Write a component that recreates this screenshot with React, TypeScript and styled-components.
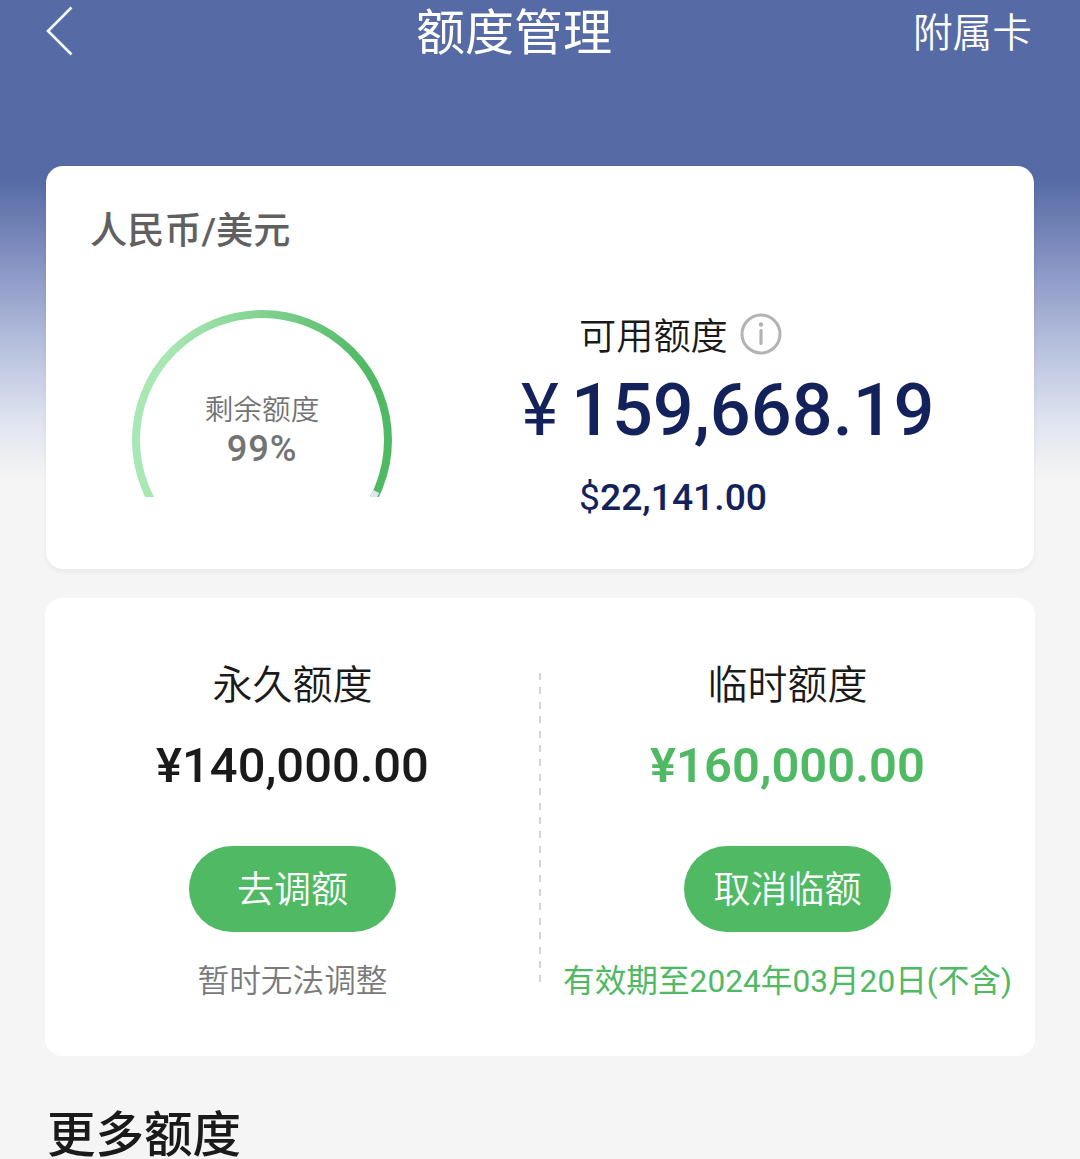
import React from 'react';
import styled, { createGlobalStyle } from 'styled-components';

const GlobalStyle = createGlobalStyle`
  * {
    box-sizing: border-box;
  }

  body {
    margin: 0;
    background: #f5f5f5;
    font-family: Roboto, 'Noto Sans CJK SC', sans-serif;
    color: #1a1a1a;
  }
`;

const Page = styled.div`
  height: 1159px;
  overflow: hidden;
  background: linear-gradient(180deg, #566ba5 0, #566ba5 180px, #8592c2 260px, #b3bddc 340px, #dfe3f0 420px, #f5f5f5 478px);
`;

const Header = styled.header`
  display: grid;
  grid-template-columns: 1fr auto 1fr;
  align-items: center;
  height: 166px;
  padding: 0 48px 98px 45px;
  color: #fff;
`;

const BackButton = styled.button`
  display: flex;
  justify-self: start;
  padding: 0;
  margin-top: -6px;
  border: none;
  background: none;
  color: inherit;
`;

const Title = styled.h1`
  margin: 0 49px 0 0;
  font-size: 49px;
  font-weight: 400;
  line-height: 66px;
`;

const HeaderLink = styled.a`
  justify-self: end;
  font-size: 39.7px;
  font-weight: 350;
  line-height: 66px;
`;

const SummaryCard = styled.section`
  height: 403px;
  margin: 0 46px;
  padding: 37px 45px 0 44px;
  border-radius: 17px;
  background: #fff;
  box-shadow: 0 2px 5px rgba(0, 0, 0, 0.06);
`;

const Currency = styled.h2`
  margin: 0;
  font-size: 37.2px;
  font-weight: 500;
  line-height: 56px;
  color: #606060;
`;

const SummaryBody = styled.div`
  display: flex;
  align-items: flex-start;
  padding: 51px 0 0 42px;
`;

const Gauge = styled.div`
  display: grid;
  flex: none;
  width: 260px;
  height: 187px;

  > * {
    grid-area: 1 / 1;
  }
`;

const GaugeText = styled.div`
  padding-top: 79px;
  text-align: center;
  color: #737373;
`;

const GaugeLabel = styled.div`
  font-size: 28.7px;
  font-weight: 350;
  line-height: 42px;
`;

const GaugeValue = styled.div`
  font-size: 36.3px;
  font-weight: 500;
  line-height: 36px;
  letter-spacing: 0.8px;
`;

const Available = styled.div`
  margin-left: 129px;
`;

const AvailableLabel = styled.div`
  display: flex;
  align-items: center;
  gap: 12px;
  padding: 2px 0 0 58px;
  font-size: 37.2px;
  font-weight: 350;
  line-height: 50px;

  svg {
    margin-top: -6px;
  }
`;

const AvailableAmount = styled.div`
  display: flex;
  margin-top: 7px;
  font-size: 72px;
  font-weight: 500;
  line-height: 84px;
  color: #14225c;
`;

const YuanSign = styled.span`
  width: 50px;
  font-weight: 400;
`;

const DollarAmount = styled.div`
  margin-top: 21px;
  padding-left: 58px;
  font-size: 37.3px;
  font-weight: 500;
  line-height: 46px;
  color: #14225c;

  span {
    font-weight: 400;
  }
`;

const LimitCard = styled.section`
  display: grid;
  grid-template-columns: 1fr 1fr;
  position: relative;
  height: 458px;
  margin: 29px 45px 0;
  border-radius: 17px;
  background: #fff;
`;

const Divider = styled.div`
  position: absolute;
  top: 75px;
  left: 494px;
  width: 2px;
  height: 310px;
  background: repeating-linear-gradient(180deg, #d4d4d4 0, #d4d4d4 7px, transparent 7px, transparent 14.4px);
`;

const LimitColumn = styled.div<{ $accent?: boolean }>`
  display: flex;
  flex-direction: column;
  align-items: center;
  padding-top: 59px;
  white-space: nowrap;
  --amount: ${props => (props.$accent ? '#50b964' : '#1a1a1a')};
  --amount-weight: ${props => (props.$accent ? 600 : 500)};
  --note: ${props => (props.$accent ? '#50b964' : '#7a7a7a')};
  --note-weight: ${props => (props.$accent ? 400 : 350)};
`;

const LimitName = styled.div`
  font-size: 40px;
  font-weight: 350;
  line-height: 58px;
`;

const LimitAmount = styled.div`
  margin-top: 22px;
  font-size: 48.9px;
  font-weight: var(--amount-weight);
  line-height: 58px;
  color: var(--amount);
`;

const LimitButton = styled.button`
  width: 207px;
  height: 86px;
  margin-top: 51px;
  padding: 3px 0 0;
  border: none;
  border-radius: 43px;
  background: #50b963;
  color: #fff;
  font-family: inherit;
  font-size: 37px;
  font-weight: 350;
  line-height: 83px;
`;

const LimitNote = styled.div`
  margin-top: 25px;
  font-size: 31.65px;
  font-weight: var(--note-weight);
  line-height: 50px;
  color: var(--note);
`;

const SectionTitle = styled.h2`
  margin: 57px 47px 0;
  font-size: 48.5px;
  font-weight: 500;
  line-height: 46px;
`;

interface Limit {
  name: string;
  amount: string;
  action: string;
  note: string;
  accent?: boolean;
}

const limits: Limit[] = [
  { name: '永久额度', amount: '¥140,000.00', action: '去调额', note: '暂时无法调整' },
  { name: '临时额度', amount: '¥160,000.00', action: '取消临额', note: '有效期至2024年03月20日(不含)', accent: true }
];

const BackIcon: React.FC = () => (
  <svg width="28" height="50" viewBox="0 0 28 50" fill="none" stroke="#f0f8ff" strokeWidth="2.7">
    <path d="M26.5 1.5 L3 25 L26.5 48.5" />
  </svg>
);

const InfoIcon: React.FC = () => (
  <svg width="42" height="42" viewBox="0 0 42 42" fill="none" stroke="#b3b3b3">
    <circle cx="21" cy="21" r="19" strokeWidth="3" />
    <path d="M21 17.5 V30.5" strokeWidth="3.2" strokeLinecap="round" />
    <circle cx="21" cy="11.5" r="2.2" fill="#b3b3b3" stroke="none" />
  </svg>
);

const GaugeArc: React.FC = () => (
  <svg width="260" height="187" viewBox="0 0 260 187" fill="none">
    <defs>
      <linearGradient id="arc" gradientUnits="userSpaceOnUse" x1="30" y1="90" x2="230" y2="110">
        <stop offset="0" stopColor="#a9e7b5" />
        <stop offset="1" stopColor="#50b963" />
      </linearGradient>
    </defs>
    <circle cx="130" cy="130" r="126" stroke="url(#arc)" strokeWidth="8" />
    <path d="M244.2 181.5 A125 125 0 0 1 238 193" stroke="#e0e4f2" strokeWidth="6.5" />
  </svg>
);

export default function App() {
  return (
    <>
      <GlobalStyle />
      <Page>
        <Header>
          <BackButton aria-label="返回">
            <BackIcon />
          </BackButton>
          <Title>额度管理</Title>
          <HeaderLink>附属卡</HeaderLink>
        </Header>

        <SummaryCard>
          <Currency>人民币/美元</Currency>
          <SummaryBody>
            <Gauge>
              <GaugeArc />
              <GaugeText>
                <GaugeLabel>剩余额度</GaugeLabel>
                <GaugeValue>99%</GaugeValue>
              </GaugeText>
            </Gauge>
            <Available>
              <AvailableLabel>
                可用额度
                <InfoIcon />
              </AvailableLabel>
              <AvailableAmount>
                <YuanSign>¥</YuanSign>159,668.19
              </AvailableAmount>
              <DollarAmount>
                <span>$</span>22,141.00
              </DollarAmount>
            </Available>
          </SummaryBody>
        </SummaryCard>

        <LimitCard>
          {limits.map(limit => (
            <LimitColumn key={limit.name} $accent={limit.accent}>
              <LimitName>{limit.name}</LimitName>
              <LimitAmount>{limit.amount}</LimitAmount>
              <LimitButton>{limit.action}</LimitButton>
              <LimitNote>{limit.note}</LimitNote>
            </LimitColumn>
          ))}
          <Divider />
        </LimitCard>

        <SectionTitle>更多额度</SectionTitle>
      </Page>
    </>
  );
}
